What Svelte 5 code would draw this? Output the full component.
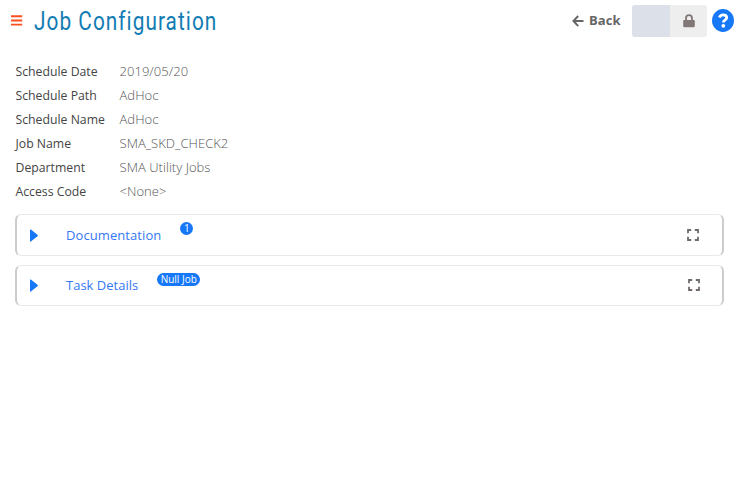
<script>
  const details = [
    ['Schedule Date', '2019/05/20'],
    ['Schedule Path', 'AdHoc'],
    ['Schedule Name', 'AdHoc'],
    ['Job Name', 'SMA_SKD_CHECK2'],
    ['Department', 'SMA Utility Jobs'],
    ['Access Code', '<None>'],
  ];
  const panels = [
    { title: 'Documentation', badge: '1', kind: 'docs' },
    { title: 'Task Details', badge: 'Null Job', kind: 'task' },
  ];
</script>

<div class="page">
  <header>
    <button class="menu" aria-label="Menu">
      <svg width="12" height="11" viewBox="0 0 12 11"><path d="M0 1.2h11.2M0 5.5h11.2M0 9.6h11.2" stroke="#fc4f1e" stroke-width="1.9" /></svg>
    </button>
    <h1><span>Job Configuration</span></h1>
    <button class="back">
      <svg width="12" height="12" viewBox="0 0 12 12"><path d="M6.2 1L1.4 6l4.8 5M1.6 6H11.5" fill="none" stroke="#666" stroke-width="1.9" /></svg>
      <span>Back</span>
    </button>
    <div class="toggle">
      <span class="knob"></span>
      <span class="lock">
        <svg width="12" height="14" viewBox="0 0 12 14"><path d="M3 6.5V4.2a3 3 0 0 1 6 0v2.3" fill="none" stroke="#817777" stroke-width="1.8" /><rect x="0.2" y="6" width="11.6" height="7.3" rx="1.2" fill="#817777" /></svg>
      </span>
    </div>
    <button class="help" aria-label="Help">
      <svg width="22" height="23" viewBox="0 0 22 23"><ellipse cx="11" cy="11.5" rx="11" ry="11.4" fill="#1677f7" /><path d="M7.4 8.4C8 6.8 9.4 5.8 11.1 5.8c2 0 3.6 1.2 3.6 3 0 2.4-3.3 2.4-3.3 4.6" fill="none" stroke="#fff" stroke-width="2.8" /><circle cx="11.3" cy="16.8" r="1.9" fill="#fff" /></svg>
    </button>
  </header>

  <dl>
    {#each details as [label, value]}
      <div class="row"><dt>{label}</dt><dd>{value}</dd></div>
    {/each}
  </dl>

  {#each panels as panel}
    <section class={panel.kind}>
      <svg class="caret" width="8" height="13" viewBox="0 0 8 13"><path d="M0 1Q0 0 .9.6L7.4 5.8Q8.2 6.5 7.4 7.2L.9 12.4Q0 13 0 12Z" fill="#1677f7" /></svg>
      <span class="title">{panel.title}</span>
      <span class="badge">{panel.badge}</span>
      <svg class="expand" width="12" height="12" viewBox="0 0 12 12"><path d="M1 4.2V1h3.2M7.8 1H11v3.2M11 7.8V11H7.8M4.2 11H1V7.8" fill="none" stroke="#716a6a" stroke-width="1.8" /></svg>
    </section>
  {/each}
</div>

<style>
  :global(body) { background: #fff; }
  .page {
    width: 738px;
    height: 490px;
    box-sizing: border-box;
    overflow: hidden;
    font: 13px/24px 'Open Sans', sans-serif;
    color: #444;
  }
  svg { display: block; flex: none; }
  button { border: 0; padding: 0; background: none; font: inherit; color: inherit; }
  header { display: flex; align-items: center; height: 41px; padding: 0 4px 0 11px; }
  .menu { width: 22.7px; }
  h1 {
    margin: 0;
    width: 190px;
    font: 400 26px/40px Roboto, sans-serif;
    letter-spacing: 1.3px;
    color: #127cb3;
    white-space: nowrap;
  }
  h1 span { display: inline-block; transform: scaleX(0.8); transform-origin: left; }
  .back {
    display: flex;
    align-items: center;
    gap: 5px;
    width: 60px;
    margin-left: auto;
    font-weight: 700;
    color: #666;
  }
  .back span { margin-top: -2px; letter-spacing: 0.1px; }
  .toggle { display: flex; width: 75px; height: 32px; border-radius: 3px; overflow: hidden; background: #eee; }
  .knob { width: 38px; background: #dce0e8; }
  .lock { display: flex; flex: 1; align-items: center; justify-content: center; padding-left: 0.5px; }
  .help { margin-left: 5px; }
  dl { margin: 18px 0 11px 15.5px; }
  .row { display: flex; height: 24px; }
  dt { width: 104px; font-size: 12.25px; line-height: 26px; }
  dd { margin: 0; font-weight: 300; color: #555; letter-spacing: 0.04px; }
  section {
    display: flex;
    align-items: center;
    box-sizing: border-box;
    width: 709px;
    height: 42px;
    margin: 0 0 9px 15px;
    padding: 0 23px 0 13px;
    border: 1px solid #e9e9e9;
    border-width: 1px 2px;
    border-left-color: #ccc;
    border-right-color: #ccc;
    border-radius: 6px;
  }
  .task { height: 41px; padding: 0 22px 1px 13px; }
  .title { margin-left: 28px; color: #3678f5; }
  .docs .title { letter-spacing: 0.08px; }
  .badge {
    box-sizing: border-box;
    height: 13px;
    margin: 0 0 13px 19px;
    padding: 0 3.5px;
    border-radius: 7px;
    background: #1677f7;
    color: #fff;
    font-size: 10px;
    line-height: 13px;
  }
  .task .badge { margin-bottom: 12px; }
  .expand { margin-left: auto; }
</style>
